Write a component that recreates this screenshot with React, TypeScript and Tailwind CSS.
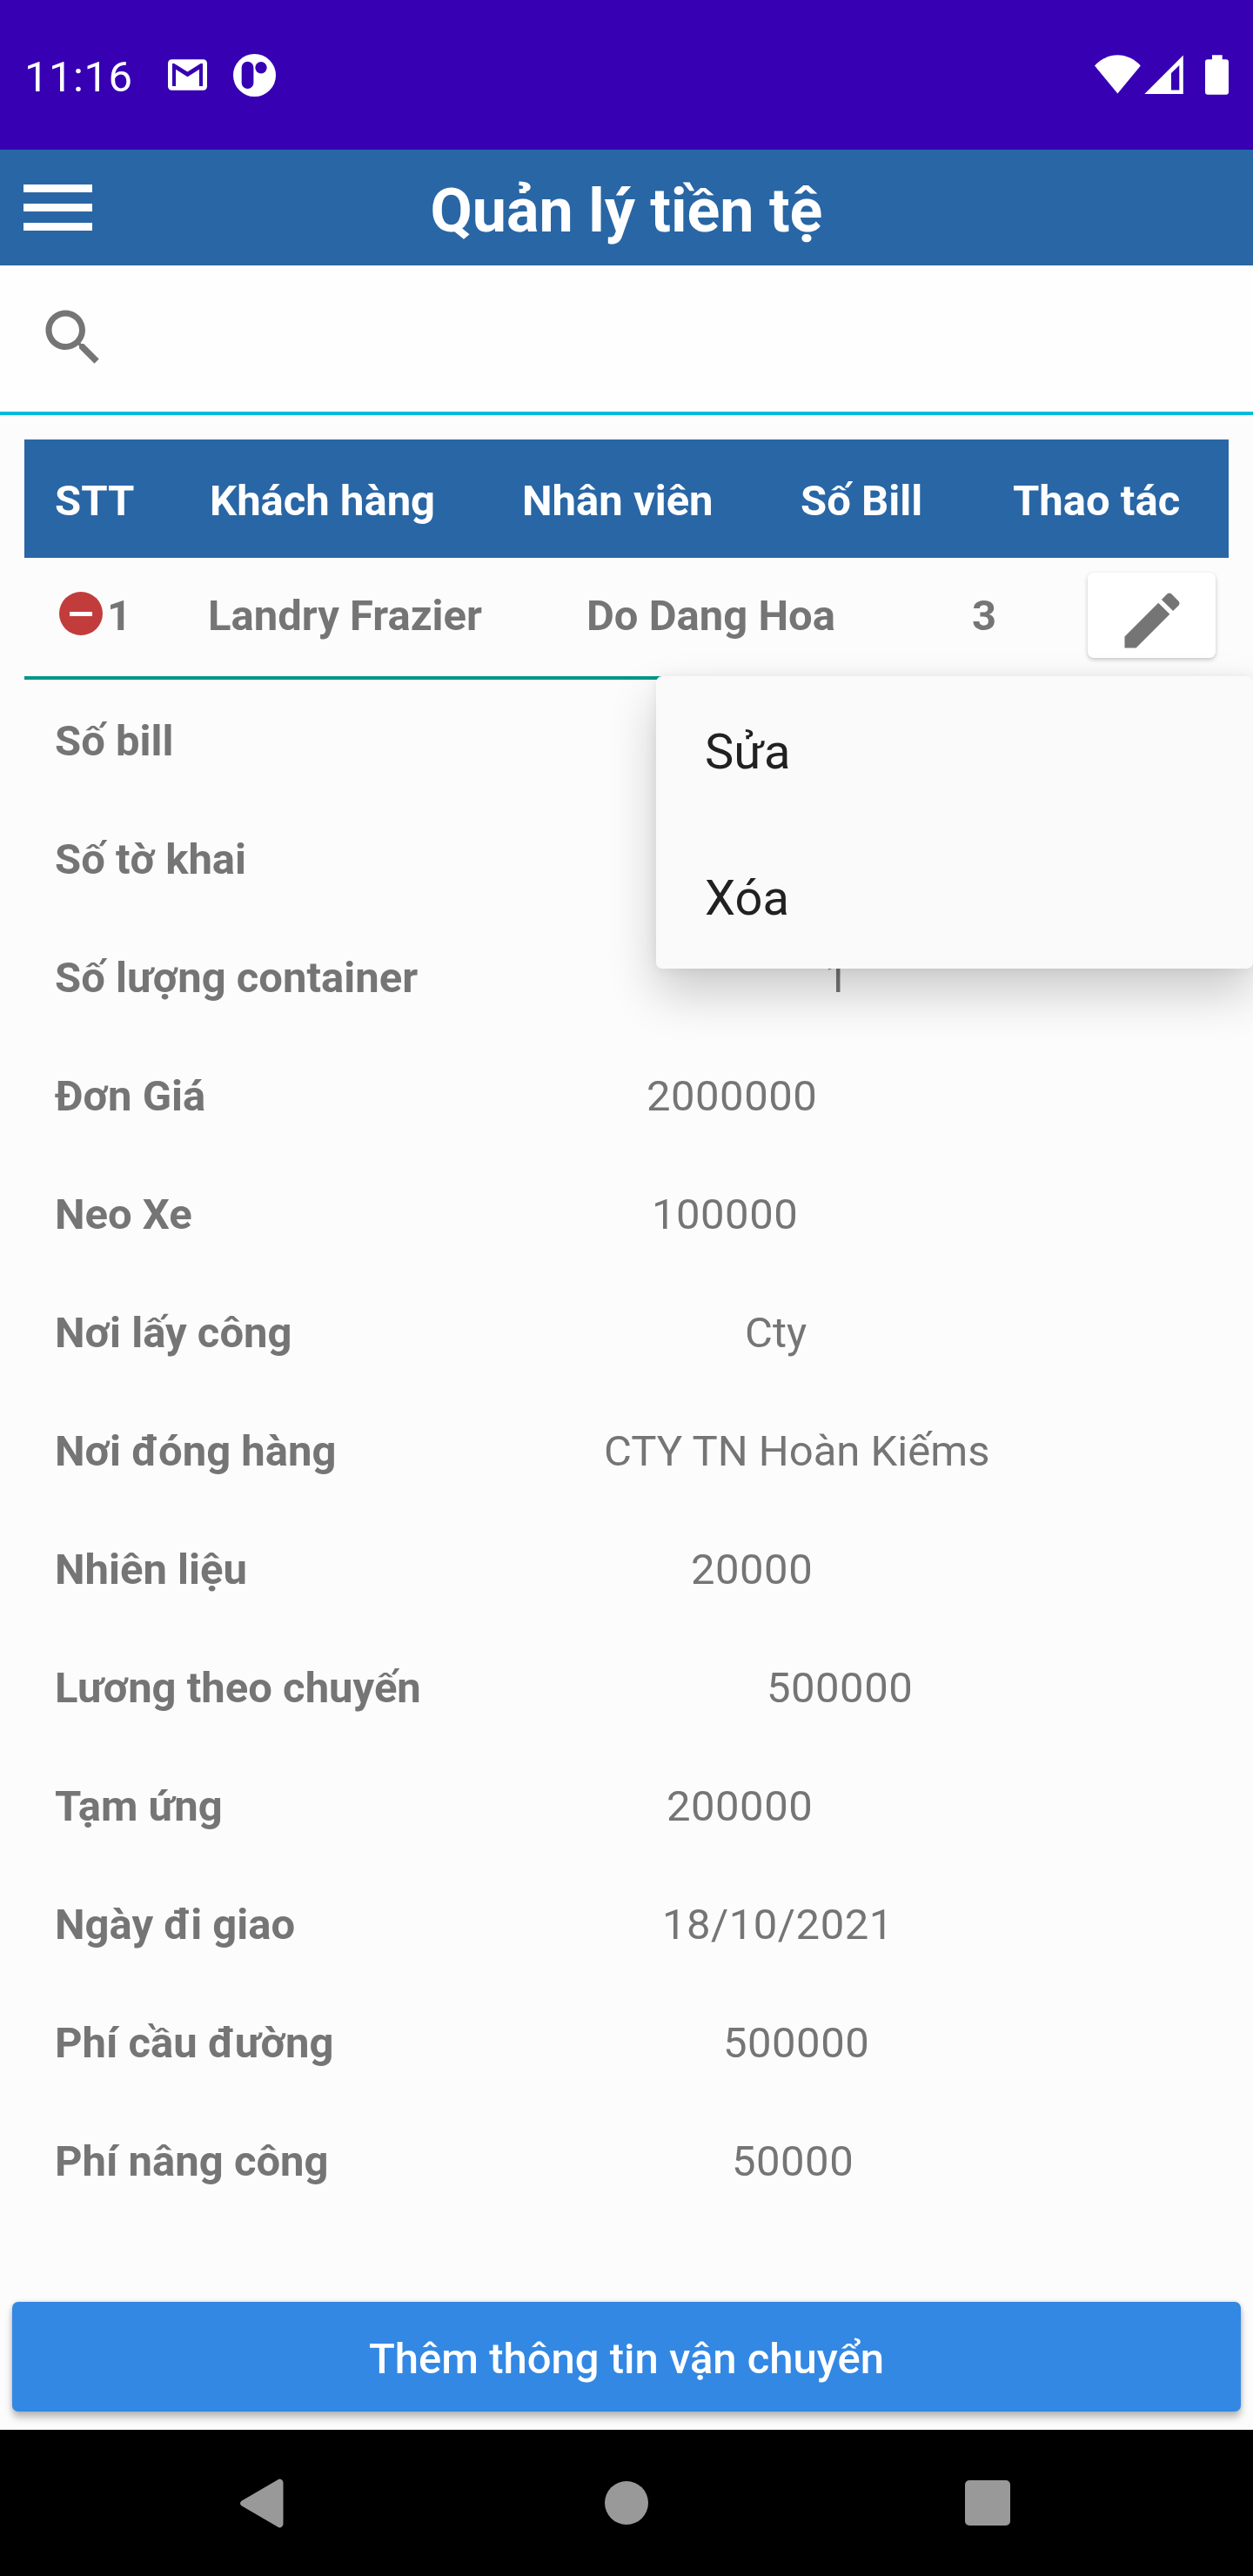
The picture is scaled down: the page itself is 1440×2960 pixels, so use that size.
const details = [
  { label: "Số bill", value: "", labelClass: "w-[700px]" },
  { label: "Số tờ khai", value: "", labelClass: "w-[700px]" },
  { label: "Số lượng container", value: "1", labelClass: "w-[885px]" },
  { label: "Đơn Giá", value: "2000000", labelClass: "w-[680px]" },
  { label: "Neo Xe", value: "100000", labelClass: "w-[686px]" },
  { label: "Nơi lấy công", value: "Cty", labelClass: "w-[793px]" },
  { label: "Nơi đóng hàng", value: "CTY TN Hoàn Kiếms", labelClass: "w-[631px]" },
  { label: "Nhiên liệu", value: "20000", labelClass: "w-[731px]" },
  { label: "Lương theo chuyến", value: "500000", labelClass: "w-[818px]" },
  { label: "Tạm ứng", value: "200000", labelClass: "w-[703px]" },
  { label: "Ngày đi giao", value: "18/10/2021", labelClass: "w-[698px]" },
  { label: "Phí cầu đường", value: "500000", labelClass: "w-[768px]" },
  { label: "Phí nâng công", value: "50000", labelClass: "w-[778px]" },
];

function StatusBar() {
  return (
    <div className="flex h-[172px] items-center bg-[#3700b3] pr-7 pl-7 text-white">
      <span className="w-[160px] pt-[5px] text-[49px] leading-none tracking-[0.5px]">11:16</span>
      <svg className="ml-[5px] h-9 w-[45px]" viewBox="0 0 45 36">
        <rect y="0.3" width="45" height="35.5" rx="4.5" fill="white" />
        <path d="M5 31V5h2.2L22.5 14.5 37.5 5H40v26h-4V11.700L22.500 20.300 9 11.700V31z" fill="#3700b3" />
      </svg>
      <svg className="ml-[30px] h-[49px] w-[49px]" viewBox="0 0 49 49">
        <circle cx="24.500" cy="24.500" r="24.500" fill="white" />
        <rect x="9.700" y="8.800" width="13.700" height="31.300" rx="6.850" fill="#3700b3" />
        <circle cx="32" cy="15.700" r="6.700" fill="#3700b3" />
      </svg>
      <svg className="ml-auto h-[46px] w-[154px]" viewBox="0 0 154 46" fill="white">
        <path d="M0 12.500C6.500 5 16.500 0.300 26.400 0.300S46.200 5 52.800 12.500L26.400 44.500z" />
        <path fillRule="evenodd" d="M57.300 45 101.800 0.500V45zM88 40.500h9.300V12L88 21z" />
        <path d="M135 0.300h11.700V5.300h4.300a3 3 0 0 1 3 3v34.500a3 3 0 0 1-3 3h-21a3 3 0 0 1-3-3V8.300a3 3 0 0 1 3-3h5z" />
      </svg>
    </div>
  );
}

function NavBar() {
  return (
    <div className="flex h-[168px] items-center bg-black pl-[276px]">
      <svg className="h-[57px] w-[50px]" viewBox="0 0 50 57">
        <path d="M1.500 25.800 43.500 1.200a4 4 0 0 1 6 3.500v47.600a4 4 0 0 1-6 3.500L1.500 31.200a3.200 3.200 0 0 1 0-5.400z" fill="#999" />
      </svg>
      <div className="ml-[369px] size-[50px] rounded-full bg-[#999]" />
      <div className="ml-[364px] size-[52px] rounded-[5px] bg-[#999]" />
    </div>
  );
}

export default function App() {
  return (
    <div className="flex h-[2960px] w-[1440px] flex-col overflow-hidden bg-[#fcfcfc] font-['Roboto',sans-serif] text-[49px] leading-[58px] whitespace-nowrap text-[#757575]">
      <StatusBar />

      <header className="grid h-[133px] grid-cols-3 items-center bg-[#2966a5]">
        <div className="ml-[27px] flex w-[79px] flex-col gap-[13px]">
          <div className="h-[9px] bg-white" />
          <div className="h-[9px] bg-white" />
          <div className="h-[9px] bg-white" />
        </div>
        <h1 className="pt-[7px] text-center text-[70px] leading-[82px] font-bold text-white">Quản lý tiền tệ</h1>
      </header>

      <div className="h-[172px] border-b-4 border-[#00bcd9] bg-[#fefefe] pt-[41px] pl-[42px]">
        <svg className="size-[84px]" viewBox="0 0 24 24" fill="#757575">
          <path d="M15.500 14h-.79l-.28-.27C15.410 12.590 16 11.110 16 9.500 16 5.910 13.090 3 9.500 3S3 5.910 3 9.500 5.910 16 9.500 16c1.610 0 3.090-.59 4.230-1.570l.27.28v.79l5 4.990L20.490 19l-4.990-5zm-6 0C7.010 14 5 11.990 5 9.500S7.010 5 9.500 5 14 7.010 14 9.500 11.990 14 9.500 14z" />
        </svg>
      </div>

      <main className="px-7 pt-7">
        <div className="flex h-[136px] items-center bg-[#2966a5] pt-[5px] pl-[35px] font-bold text-white">
          <span className="w-[178px]">STT</span>
          <span className="w-[359px]">Khách hàng</span>
          <span className="w-[320px]">Nhân viên</span>
          <span className="w-[244px]">Số Bill</span>
          <span>Thao tác</span>
        </div>

        <div className="relative flex h-[140px] items-start border-b-4 border-[#009688] pl-10 font-bold">
          <div className="mt-[39px] flex h-[50px] w-[50px] items-center justify-center rounded-full bg-[#c23c3c]">
            <div className="h-[5px] w-[26px] bg-white" />
          </div>
          <span className="mt-[38px] ml-[5px] w-[116px]">1</span>
          <span className="mt-[38px] w-[435px]">Landry Frazier</span>
          <span className="mt-[38px] w-[443px]">Do Dang Hoa</span>
          <span className="mt-[38px] w-[133px]">3</span>
          <button className="mt-[17px] flex h-[98px] w-[147px] justify-center rounded-[7px] bg-white pt-[13px] shadow-[0_2px_5px_rgba(0,0,0,0.22)]">
            <svg className="size-[84px]" viewBox="0 0 24 24" fill="#757575">
              <path d="M3 17.250V21h3.750L17.810 9.940l-3.750-3.750L3 17.250zM20.710 7.040c.39-.39.39-1.020 0-1.410l-2.340-2.340c-.39-.39-1.020-.39-1.410 0l-1.830 1.830 3.750 3.750 1.830-1.830z" />
            </svg>
          </button>

          <div className="absolute top-[136px] -right-7 z-10 w-[686px] rounded-[7px] bg-[#fafafa] text-[56px] leading-[66px] font-normal text-[#212121] shadow-[0_28px_56px_rgba(0,0,0,0.2),0_0_14px_rgba(0,0,0,0.07)]">
            <div className="flex h-[168px] items-center pt-[6px] pl-14">Sửa</div>
            <div className="flex h-[168px] items-center pt-[6px] pl-14">Xóa</div>
          </div>
        </div>

        {details.map((d) => (
          <div key={d.label} className="flex h-[136px] items-center pt-[5px] pl-[35px]">
            <span className={d.labelClass + " shrink-0 font-bold"}>{d.label}</span>
            <span className={/^\d/.test(d.value) ? "tracking-[0.5px]" : ""}>{d.value}</span>
          </div>
        ))}
      </main>

      <div className="mt-auto px-[14px] pb-[21px]">
        <button className="h-[126px] w-full rounded-[7px] bg-[#3388e4] pt-[5px] font-medium text-white shadow-[0_7px_9px_rgba(0,0,0,0.25),0_0_5px_rgba(0,0,0,0.15)]">
          Thêm thông tin vận chuyển
        </button>
      </div>
      <NavBar />
    </div>
  );
}
